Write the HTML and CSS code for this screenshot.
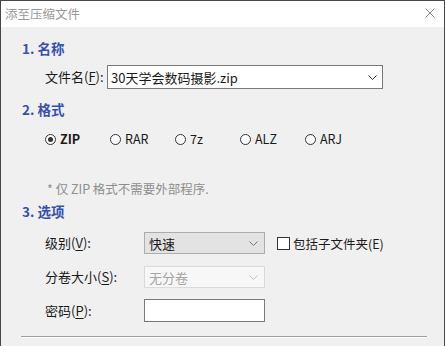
FILE: index.html
```html
<!DOCTYPE html>
<html>
<head>
<meta charset="utf-8">
<link rel="stylesheet" href="styles.css">
</head>
<body>
<div class="window">
  <div class="titlebar">
    <span class="title">添至压缩文件</span>
    <svg class="close" width="10" height="10" viewBox="0 0 10 10"><path d="M0.5 0.5 L9.5 9.5 M9.5 0.5 L0.5 9.5" stroke="#8a8a8a" stroke-width="1" fill="none"/></svg>
  </div>
  <div class="content">
    <div class="heading h1">1. 名称</div>
    <div class="filerow">
      <span class="label">文件名(<u>F</u>):</span>
      <div class="combo">
        <span>30天学会数码摄影.zip</span>
        <svg width="9" height="5" viewBox="0 0 9 5"><path d="M0.5 0.5 L4.5 4.5 L8.5 0.5" stroke="#333" fill="none"/></svg>
      </div>
    </div>

    <div class="heading h2">2. 格式</div>
    <div class="radios">
      <label class="radio on"><span class="dot"></span><b>ZIP</b></label>
      <label class="radio"><span class="dot"></span>RAR</label>
      <label class="radio"><span class="dot"></span>7z</label>
      <label class="radio"><span class="dot"></span>ALZ</label>
      <label class="radio"><span class="dot"></span>ARJ</label>
    </div>
    <div class="note">* 仅 ZIP 格式不需要外部程序.</div>

    <div class="heading h3">3. 选项</div>
    <div class="optrow first">
      <span class="label">级别(<u>V</u>):</span>
      <div class="select">
        <span>快速</span>
        <svg width="9" height="5" viewBox="0 0 9 5"><path d="M0.5 0.5 L4.5 4.5 L8.5 0.5" stroke="#777" fill="none"/></svg>
      </div>
      <label class="check"><span class="box"></span>包括子文件夹(E)</label>
    </div>
    <div class="optrow">
      <span class="label">分卷大小(<u>S</u>):</span>
      <div class="select disabled">
        <span>无分卷</span>
        <svg width="9" height="5" viewBox="0 0 9 5"><path d="M0.5 0.5 L4.5 4.5 L8.5 0.5" stroke="#c4c4c4" fill="none"/></svg>
      </div>
    </div>
    <div class="optrow pw">
      <span class="label">密码(<u>P</u>):</span>
      <div class="textbox"></div>
    </div>
    <div class="separator"></div>
  </div>
</div>
</body>
</html>
```

FILE: styles.css
```css
html, body {
  margin: 0;
  padding: 0;
}

body {
  font-family: "Noto Sans CJK SC", "Noto Sans", sans-serif;
  font-size: 13px;
  color: #1a1a1a;
  background: #f0f0f0;
}

.window {
  width: 445px;
  height: 346px;
  box-sizing: border-box;
  border: 1px solid #474747;
  border-bottom: none;
  background: #f0f0f0;
  overflow: hidden;
}

.titlebar {
  height: 26px;
  background: #fff;
  display: flex;
  align-items: center;
  justify-content: space-between;
  padding: 0 9px 0 4px;
}

.title {
  font-size: 12.5px;
  color: #9a9a9a;
  margin-top: -1px;
}

.close {
  margin-top: -3px;
}

.content {
  padding: 0 0 0 21px;
}

.heading {
  color: #3550b4;
  font-weight: bold;
  font-size: 13.5px;
  line-height: 18px;
  height: 18px;
}

.h1 { padding-top: 12px; }
.h2 { margin-top: 11px; }
.h3 { margin-top: 4px; }

u {
  text-decoration: underline;
  text-underline-offset: 2px;
}

.label {
  line-height: 18px;
}

.filerow {
  display: flex;
  align-items: center;
  margin-top: 8px;
  padding-left: 23px;
  height: 24px;
}

.filerow .label {
  width: 62px;
}

.combo {
  width: 276px;
  height: 24px;
  box-sizing: border-box;
  border: 1px solid #7a7a7a;
  background: #fff;
  display: flex;
  align-items: center;
  justify-content: space-between;
  padding: 0 5px 0 3px;
  font-size: 13px;
}

.radios {
  display: flex;
  margin-top: 14px;
  padding-left: 23px;
  height: 14px;
  align-items: center;
}

.radio {
  width: 65px;
  flex: none;
  display: flex;
  align-items: center;
  font-size: 12.5px;
  line-height: 14px;
}

.radio b {
  font-weight: bold;
}

.dot {
  width: 11px;
  height: 11px;
  box-sizing: border-box;
  border: 1px solid #333;
  border-radius: 50%;
  background: #fff;
  margin-right: 4px;
  position: relative;
}

.radio.on .dot::after {
  content: "";
  position: absolute;
  left: 2px;
  top: 2px;
  width: 5px;
  height: 5px;
  border-radius: 50%;
  background: #333;
}

.note {
  margin-top: 34px;
  padding-left: 25px;
  color: #8e8e8e;
  font-size: 12.5px;
  line-height: 18px;
  height: 18px;
}

.optrow {
  display: flex;
  align-items: center;
  margin-top: 12px;
  padding-left: 23px;
  height: 22px;
}

.optrow.first {
  margin-top: 12px;
}

.optrow.pw {
  margin-top: 11px;
  height: 23px;
}

.optrow .label {
  width: 99px;
  flex: none;
}

.select {
  width: 121px;
  height: 22px;
  box-sizing: border-box;
  border: 1px solid #adadad;
  background: #e3e3e3;
  display: flex;
  align-items: center;
  justify-content: space-between;
  padding: 0 6px 0 4px;
}

.select.disabled {
  background: #f7f7f7;
  border-color: #dadada;
  color: #a4a4a4;
}

.textbox {
  width: 121px;
  height: 23px;
  box-sizing: border-box;
  border: 1px solid #7a7a7a;
  background: #fff;
}

.check {
  display: flex;
  align-items: center;
  margin-left: 12px;
  font-size: 12.5px;
}

.box {
  width: 13px;
  height: 13px;
  box-sizing: border-box;
  border: 1px solid #333;
  background: #fff;
  margin-right: 3px;
}

.separator {
  margin-top: 14px;
  width: 406px;
  margin-left: -1px;
  height: 1px;
  background: #a0a0a0;
  border-bottom: 1px solid #fff;
}
```
